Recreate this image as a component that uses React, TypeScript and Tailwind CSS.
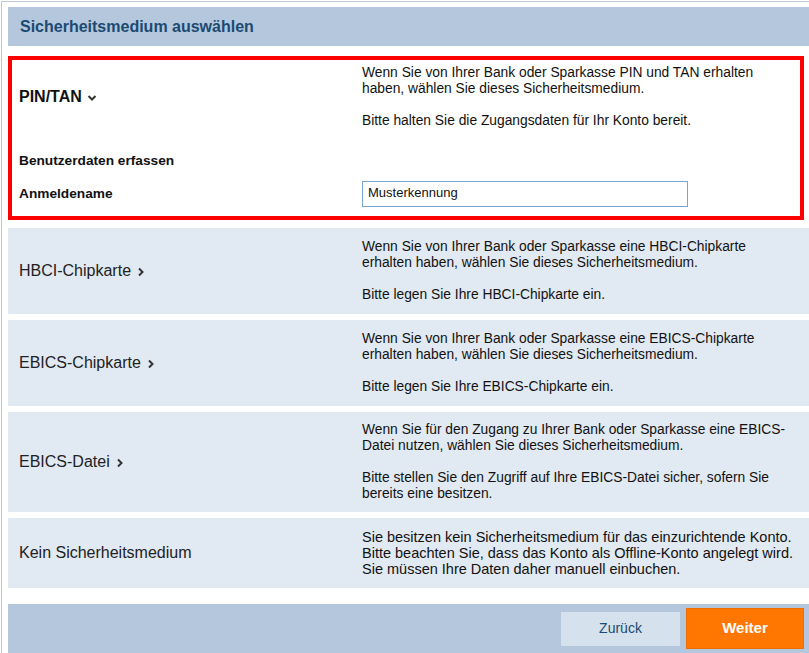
import React from 'react';

function ChevronRight() {
  return (
    <svg width="8" height="10" viewBox="0 0 8 10" className="ml-[6px] mt-[1px]">
      <path d="M2 1.5 L5.5 5 L2 8.5" fill="none" stroke="#333" strokeWidth="2" />
    </svg>
  );
}

function ChevronDown() {
  return (
    <svg width="10" height="8" viewBox="0 0 10 8" className="ml-[5px] mt-[2px]">
      <path d="M1.5 2 L5 5.5 L8.5 2" fill="none" stroke="#333" strokeWidth="2" />
    </svg>
  );
}

interface Medium {
  title: string;
  height: string;
  chevron: boolean;
  textClass: string;
  lines: React.ReactNode;
}

const media: Medium[] = [
  {
    title: 'HBCI-Chipkarte',
    height: 'h-[86px]',
    chevron: true,
    textClass: 'w-[428px] text-[13.8px]',
    lines: (
      <>
        Wenn Sie von Ihrer Bank oder Sparkasse eine HBCI-Chipkarte erhalten haben, wählen Sie dieses Sicherheitsmedium.
        <br />
        <br />
        Bitte legen Sie Ihre HBCI-Chipkarte ein.
      </>
    ),
  },
  {
    title: 'EBICS-Chipkarte',
    height: 'h-[86px]',
    chevron: true,
    textClass: 'w-[428px] text-[13.8px]',
    lines: (
      <>
        Wenn Sie von Ihrer Bank oder Sparkasse eine EBICS-Chipkarte erhalten haben, wählen Sie dieses Sicherheitsmedium.
        <br />
        <br />
        Bitte legen Sie Ihre EBICS-Chipkarte ein.
      </>
    ),
  },
  {
    title: 'EBICS-Datei',
    height: 'h-[100px]',
    chevron: true,
    textClass: 'w-[428px] text-[13.8px]',
    lines: (
      <>
        Wenn Sie für den Zugang zu Ihrer Bank oder Sparkasse eine EBICS-Datei nutzen, wählen Sie dieses Sicherheitsmedium.
        <br />
        <br />
        Bitte stellen Sie den Zugriff auf Ihre EBICS-Datei sicher, sofern Sie bereits eine besitzen.
      </>
    ),
  },
  {
    title: 'Kein Sicherheitsmedium',
    height: 'h-[70px]',
    chevron: false,
    textClass: 'whitespace-nowrap text-[14.5px]',
    lines: (
      <>
        Sie besitzen kein Sicherheitsmedium für das einzurichtende Konto.
        <br />
        Bitte beachten Sie, dass das Konto als Offline-Konto angelegt wird.
        <br />
        Sie müssen Ihre Daten daher manuell einbuchen.
      </>
    ),
  },
];

export default function App() {
  return (
    <div className="w-[809px] h-[653px] overflow-hidden bg-white font-['Liberation_Sans',Arial,sans-serif] text-[#111]">
      <div className="ml-px mt-px w-[810px] border-l border-t border-[#bcc6d0] pl-[6px] pt-[5px]">
        <div className="w-[802px]">
          {/* header */}
          <div className="h-[39px] bg-[#b5c7dc] flex items-center pl-[12px]">
            <h2 className="text-[16px] font-bold text-[#1b4a72]">Sicherheitsmedium auswählen</h2>
          </div>

          {/* selected: PIN/TAN */}
          <div className="mt-[10px] w-[796px] border-4 border-[#ff0000] bg-white">
            <div className="flex h-[74px]">
              <div className="w-[350px] pl-[7px] flex items-center">
                <span className="text-[16px] font-bold">PIN/TAN</span>
                <ChevronDown />
              </div>
              <div className="w-[428px] pt-[5px] text-[13.8px] leading-[16px]">
                Wenn Sie von Ihrer Bank oder Sparkasse PIN und TAN erhalten haben, wählen Sie dieses Sicherheitsmedium.
                <br />
                <br />
                Bitte halten Sie die Zugangsdaten für Ihr Konto bereit.
              </div>
            </div>
            <div className="mt-[19px] pl-[7px] text-[13.7px] leading-[16px] font-bold">Benutzerdaten erfassen</div>
            <div className="mt-[12px] mb-[9px] flex items-center">
              <div className="w-[350px] pl-[7px] text-[13.7px] font-bold">Anmeldename</div>
              <input
                defaultValue="Musterkennung"
                className="w-[326px] h-[26px] border border-[#7ba6d4] pl-[5px] pb-[4px] text-[13px] text-[#111] outline-none"
              />
            </div>
          </div>

          {/* other media */}
          <div className="mt-[8px] flex flex-col gap-[6px]">
            {media.map((m) => (
              <div key={m.title} className={`${m.height} bg-[#e1e9f2] flex items-center`}>
                <div className="w-[354px] pl-[11px] flex items-center">
                  <span className="text-[16px] text-[#222]">{m.title}</span>
                  {m.chevron && <ChevronRight />}
                </div>
                <div className={`${m.textClass} leading-[16px] text-[#111]`}>{m.lines}</div>
              </div>
            ))}
          </div>

          {/* footer */}
          <div className="mt-[16px] h-[49px] bg-[#b5c7dc] flex items-center justify-end gap-[6px] pr-[6px]">
            <button className="w-[119px] h-[34px] bg-[#d6e1ee] text-[14px] text-[#1b4a72]">Zurück</button>
            <button className="w-[118px] h-[41px] bg-[#ff7700] border border-[#f06d00] text-[15px] font-bold text-white">
              Weiter
            </button>
          </div>
        </div>
      </div>
    </div>
  );
}
